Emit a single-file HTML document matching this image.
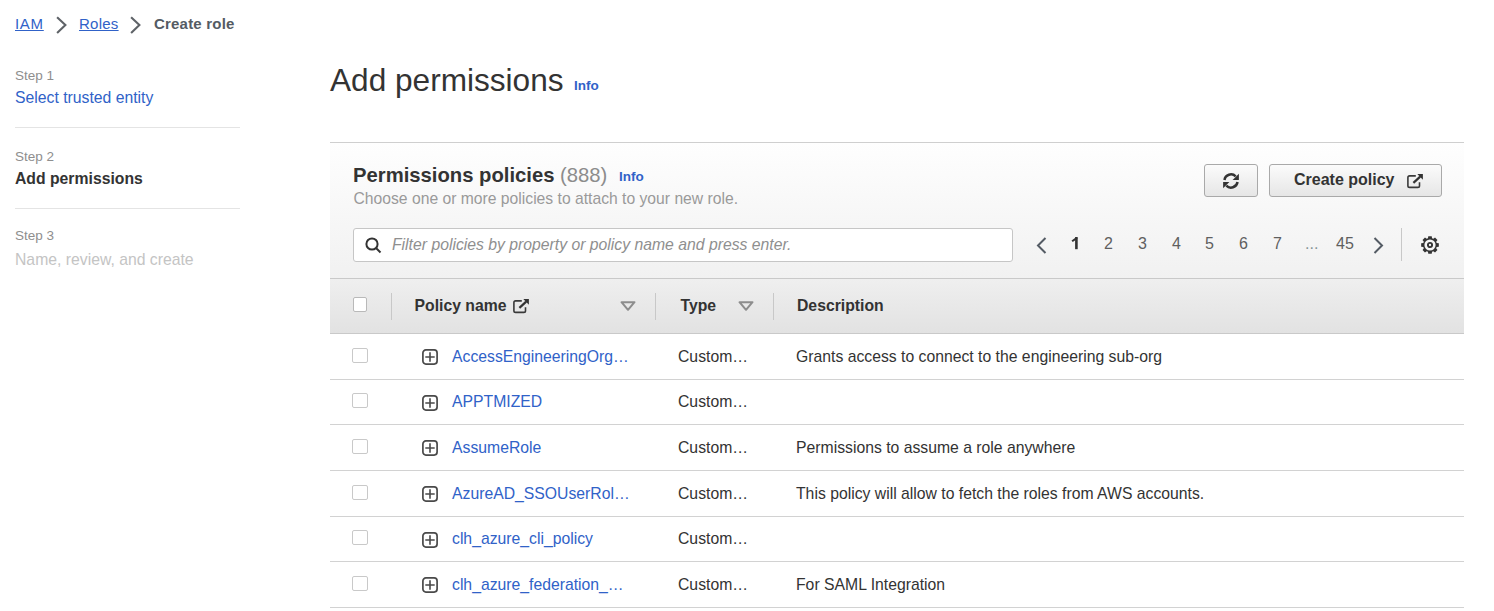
<!DOCTYPE html>
<html><head><meta charset="utf-8">
<style>
html,body{margin:0;padding:0;background:#fff;width:1494px;height:611px;overflow:hidden;position:relative;font-family:"Liberation Sans",sans-serif;}
.t{position:absolute;white-space:nowrap;line-height:1;}
.lk{color:#3062c8;}
.hr{position:absolute;height:1px;background:#e4e4e4;}
svg{position:absolute;overflow:visible;}
.card-h{position:absolute;left:330px;top:142px;width:1134px;height:136px;border-top:1px solid #cfcfcf;background:linear-gradient(#fefefe,#f1f1f1);}
.th{position:absolute;left:330px;top:278px;width:1134px;height:54px;border-top:1px solid #c9c9c9;border-bottom:1px solid #c9c9c9;background:linear-gradient(#efefef,#e2e2e2);}
.btn{position:absolute;top:164px;height:31px;border:1px solid #a9a9a9;border-radius:3px;background:linear-gradient(#fbfbfb,#e6e6e6);}
.inp{position:absolute;left:353px;top:228px;width:658px;height:32px;border:1px solid #c6c6c6;border-radius:3px;background:#fff;}
.cb{position:absolute;width:14px;height:13px;border:1px solid #c9c9c9;border-radius:2px;background:#fff;}
.rowb{position:absolute;left:330px;width:1134px;height:1px;background:#d2d2d2;}
.vd{position:absolute;width:1px;background:#c8c8c8;}
</style></head><body>

<!-- breadcrumbs -->
<div class="t lk" style="left:15px;top:15.5px;font-size:15px;letter-spacing:0.7px;text-decoration:underline;text-underline-offset:1px;">IAM</div>
<svg style="left:56px;top:16px" width="11" height="18" viewBox="0 0 11 18"><polyline points="1.1,1.2 9.4,9.1 1.1,17" fill="none" stroke="#5f6368" stroke-width="2.1"/></svg>
<div class="t lk" style="left:79px;top:15.5px;font-size:15px;letter-spacing:0.25px;text-decoration:underline;text-underline-offset:1px;">Roles</div>
<svg style="left:129.5px;top:16px" width="11" height="18" viewBox="0 0 11 18"><polyline points="1.1,1.2 9.4,9.1 1.1,17" fill="none" stroke="#5f6368" stroke-width="2.1"/></svg>
<div class="t" style="left:154px;top:15.5px;font-size:15px;letter-spacing:0.2px;font-weight:bold;color:#545b64;">Create role</div>

<!-- steps -->
<div class="t" style="left:15px;top:68.5px;font-size:13.5px;color:#8e8e8e;">Step 1</div>
<div class="t lk" style="left:15px;top:89.5px;font-size:15.75px;">Select trusted entity</div>
<div class="hr" style="left:15px;top:127px;width:225px;"></div>
<div class="t" style="left:15px;top:149.5px;font-size:13.5px;color:#8e8e8e;">Step 2</div>
<div class="t" style="left:15px;top:170.5px;font-size:15.75px;font-weight:bold;color:#333;">Add permissions</div>
<div class="hr" style="left:15px;top:208px;width:225px;"></div>
<div class="t" style="left:15px;top:229px;font-size:13.5px;color:#8e8e8e;">Step 3</div>
<div class="t" style="left:15px;top:251.5px;font-size:15.75px;color:#c4c4c4;">Name, review, and create</div>

<!-- h1 -->
<div class="t" style="left:330px;top:64.5px;font-size:31.6px;color:#333;">Add permissions</div>
<div class="t lk" style="left:574px;top:79px;font-size:13.5px;font-weight:bold;">Info</div>

<!-- card header -->
<div class="card-h"></div>
<div class="t" style="left:353px;top:164.5px;font-size:20.25px;font-weight:bold;color:#333;">Permissions policies <span style="font-weight:normal;color:#8c8c8c;">(888)</span></div>
<div class="t lk" style="left:619px;top:169.5px;font-size:13.5px;font-weight:bold;">Info</div>
<div class="t" style="left:353.5px;top:190.5px;font-size:15.7px;color:#9a9a9a;">Choose one or more policies to attach to your new role.</div>

<div class="btn" style="left:1204px;width:52px;"></div>
<div class="btn" style="left:1269px;width:171px;"></div>
<div class="t" style="left:1294px;top:172px;font-size:16px;font-weight:bold;color:#333;">Create policy</div>

<div class="inp"></div>
<div class="t" style="left:392px;top:236.5px;font-size:15.75px;font-style:italic;color:#8f8f8f;">Filter policies by property or policy name and press enter.</div>

<!-- table header -->
<div class="th"></div>


<!-- refresh icon -->
<svg style="left:1223px;top:172.7px" width="16" height="16" viewBox="0 0 16 16"><path d="M1.47 7A6.6 6.6 0 0 1 12.67 3.33" fill="none" stroke="#333" stroke-width="2.5"/><path d="M14.53 9A6.6 6.6 0 0 1 3.33 12.67" fill="none" stroke="#333" stroke-width="2.5"/><path d="M9.6 7.1H15.9V0.8Z" fill="#333"/><path d="M6.4 8.9H0.1V15.2Z" fill="#333"/></svg>
<!-- external icon in button -->
<svg style="left:1407px;top:174px" width="16" height="14" viewBox="0 0 16 14"><path d="M8.8 1.9H2.6Q0.9 1.9 0.9 3.6V11.7Q0.9 13.4 2.6 13.4H10.8Q12.5 13.4 12.5 11.7V8.2" fill="none" stroke="#3a3a3a" stroke-width="1.6"/><path d="M6.4 8.9L13.2 2.6" fill="none" stroke="#333" stroke-width="2.2"/><path d="M10.3 0.1H15.9V5.7Z" fill="#333"/></svg>
<!-- search icon -->
<svg style="left:365px;top:237px" width="17" height="17" viewBox="0 0 17 17"><circle cx="7" cy="7" r="5.6" fill="none" stroke="#333" stroke-width="2"/><path d="M11 11L15.5 15.5" stroke="#333" stroke-width="2"/></svg>

<!-- pagination -->
<svg style="left:1036px;top:237px" width="11" height="17" viewBox="0 0 11 17"><polyline points="9.5,1 2,8.5 9.5,16" fill="none" stroke="#545b64" stroke-width="2"/></svg>
<svg style="left:1071px;top:237px" width="8" height="13" viewBox="0 0 8 13"><path d="M5.4 0V12.2" stroke="#333" stroke-width="2.6"/><path d="M6 0.9L1.1 4.3" fill="none" stroke="#333" stroke-width="2"/></svg>
<div class="t" style="left:1104px;top:236px;font-size:16px;color:#5f5f5f;">2</div>
<div class="t" style="left:1138px;top:236px;font-size:16px;color:#5f5f5f;">3</div>
<div class="t" style="left:1172px;top:236px;font-size:16px;color:#5f5f5f;">4</div>
<div class="t" style="left:1205px;top:236px;font-size:16px;color:#5f5f5f;">5</div>
<div class="t" style="left:1239px;top:236px;font-size:16px;color:#5f5f5f;">6</div>
<div class="t" style="left:1273px;top:236px;font-size:16px;color:#5f5f5f;">7</div>
<div class="t" style="left:1305px;top:236px;font-size:16px;color:#879596;">...</div>
<div class="t" style="left:1336px;top:236px;font-size:16px;color:#5f5f5f;">45</div>
<svg style="left:1373px;top:237px" width="11" height="17" viewBox="0 0 11 17"><polyline points="1.5,1 9,8.5 1.5,16" fill="none" stroke="#545b64" stroke-width="2"/></svg>
<div class="vd" style="left:1401px;top:228px;height:33px;"></div>
<!-- gear -->
<svg style="left:1421px;top:236px" width="18" height="18" viewBox="0 0 18 18"><path d="M6.95 2.31 L7.28 0.17 L10.72 0.17 L11.05 2.31 L12.29 2.82 L14.03 1.54 L16.46 3.97 L15.18 5.71 L15.69 6.95 L17.83 7.28 L17.83 10.72 L15.69 11.05 L15.18 12.29 L16.46 14.03 L14.03 16.46 L12.29 15.18 L11.05 15.69 L10.72 17.83 L7.28 17.83 L6.95 15.69 L5.71 15.18 L3.97 16.46 L1.54 14.03 L2.82 12.29 L2.31 11.05 L0.17 10.72 L0.17 7.28 L2.31 6.95 L2.82 5.71 L1.54 3.97 L3.97 1.54 L5.71 2.82Z M14.6 9A5.6 5.6 0 1 0 3.4 9A5.6 5.6 0 1 0 14.6 9Z" fill="#333" fill-rule="evenodd"/><circle cx="9" cy="9" r="2.1" fill="none" stroke="#333" stroke-width="1.9"/></svg>

<!-- table header content -->
<div class="cb" style="left:353px;top:297px;width:12px;height:13px;border-color:#b9b9b9;"></div>
<div class="vd" style="left:391px;top:293px;height:27px;"></div>
<div class="t" style="left:414.5px;top:298px;font-size:15.75px;font-weight:bold;color:#333;">Policy name</div>
<svg style="left:513px;top:299px" width="16" height="14" viewBox="0 0 16 14"><path d="M8.8 1.9H2.6Q0.9 1.9 0.9 3.6V11.7Q0.9 13.4 2.6 13.4H10.8Q12.5 13.4 12.5 11.7V8.2" fill="none" stroke="#3a3a3a" stroke-width="1.6"/><path d="M6.4 8.9L13.2 2.6" fill="none" stroke="#333" stroke-width="2.2"/><path d="M10.3 0.1H15.9V5.7Z" fill="#333"/></svg>
<svg style="left:620px;top:301px" width="16" height="10" viewBox="0 0 16 10"><path d="M1.5 1.2H14.5L8 8.8Z" fill="none" stroke="#8d8d8d" stroke-width="2" stroke-linejoin="round"/></svg>
<div class="vd" style="left:655px;top:293px;height:27px;"></div>
<div class="t" style="left:680.5px;top:298px;font-size:15.75px;font-weight:bold;color:#333;">Type</div>
<svg style="left:738px;top:301px" width="16" height="10" viewBox="0 0 16 10"><path d="M1.5 1.2H14.5L8 8.8Z" fill="none" stroke="#8d8d8d" stroke-width="2" stroke-linejoin="round"/></svg>
<div class="vd" style="left:773px;top:293px;height:27px;"></div>
<div class="t" style="left:797px;top:298px;font-size:15.75px;font-weight:bold;color:#333;">Description</div>
<div class="cb" style="left:352px;top:348.0px;"></div>
<svg style="left:422px;top:349.2px" width="16" height="16" viewBox="0 0 16 16"><rect x="0.9" y="0.9" width="14.2" height="14.2" rx="3" fill="none" stroke="#4a4a4a" stroke-width="1.7"/><path d="M8 3.3V12.7M3.3 8H12.7" stroke="#4a4a4a" stroke-width="1.6"/></svg>
<div class="t lk" style="left:452px;top:349.0px;font-size:15.75px;">AccessEngineeringOrg…</div>
<div class="t" style="left:678px;top:349.0px;font-size:15.75px;color:#333;">Custom…</div>
<div class="t" style="left:796px;top:349.0px;font-size:15.75px;color:#333;">Grants access to connect to the engineering sub-org</div>
<div class="rowb" style="top:379px;"></div>
<div class="cb" style="left:352px;top:393px;"></div>
<svg style="left:422px;top:394.8px" width="16" height="16" viewBox="0 0 16 16"><rect x="0.9" y="0.9" width="14.2" height="14.2" rx="3" fill="none" stroke="#4a4a4a" stroke-width="1.7"/><path d="M8 3.3V12.7M3.3 8H12.7" stroke="#4a4a4a" stroke-width="1.6"/></svg>
<div class="t lk" style="left:452px;top:393.6px;font-size:15.75px;">APPTMIZED</div>
<div class="t" style="left:678px;top:393.6px;font-size:15.75px;color:#333;">Custom…</div>
<div class="rowb" style="top:424px;"></div>
<div class="cb" style="left:352px;top:439.0px;"></div>
<svg style="left:422px;top:440.2px" width="16" height="16" viewBox="0 0 16 16"><rect x="0.9" y="0.9" width="14.2" height="14.2" rx="3" fill="none" stroke="#4a4a4a" stroke-width="1.7"/><path d="M8 3.3V12.7M3.3 8H12.7" stroke="#4a4a4a" stroke-width="1.6"/></svg>
<div class="t lk" style="left:452px;top:440.0px;font-size:15.75px;">AssumeRole</div>
<div class="t" style="left:678px;top:440.0px;font-size:15.75px;color:#333;">Custom…</div>
<div class="t" style="left:796px;top:440.0px;font-size:15.75px;color:#333;">Permissions to assume a role anywhere</div>
<div class="rowb" style="top:470px;"></div>
<div class="cb" style="left:352px;top:484.9px;"></div>
<svg style="left:422px;top:486.1px" width="16" height="16" viewBox="0 0 16 16"><rect x="0.9" y="0.9" width="14.2" height="14.2" rx="3" fill="none" stroke="#4a4a4a" stroke-width="1.7"/><path d="M8 3.3V12.7M3.3 8H12.7" stroke="#4a4a4a" stroke-width="1.6"/></svg>
<div class="t lk" style="left:452px;top:485.9px;font-size:15.75px;">AzureAD_SSOUserRol…</div>
<div class="t" style="left:678px;top:485.9px;font-size:15.75px;color:#333;">Custom…</div>
<div class="t" style="left:796px;top:485.9px;font-size:15.75px;color:#333;">This policy will allow to fetch the roles from AWS accounts.</div>
<div class="rowb" style="top:516px;"></div>
<div class="cb" style="left:352px;top:530.3px;"></div>
<svg style="left:422px;top:531.5px" width="16" height="16" viewBox="0 0 16 16"><rect x="0.9" y="0.9" width="14.2" height="14.2" rx="3" fill="none" stroke="#4a4a4a" stroke-width="1.7"/><path d="M8 3.3V12.7M3.3 8H12.7" stroke="#4a4a4a" stroke-width="1.6"/></svg>
<div class="t lk" style="left:452px;top:531.3px;font-size:15.75px;">clh_azure_cli_policy</div>
<div class="t" style="left:678px;top:531.3px;font-size:15.75px;color:#333;">Custom…</div>
<div class="rowb" style="top:561px;"></div>
<div class="cb" style="left:352px;top:576.0px;"></div>
<svg style="left:422px;top:577.2px" width="16" height="16" viewBox="0 0 16 16"><rect x="0.9" y="0.9" width="14.2" height="14.2" rx="3" fill="none" stroke="#4a4a4a" stroke-width="1.7"/><path d="M8 3.3V12.7M3.3 8H12.7" stroke="#4a4a4a" stroke-width="1.6"/></svg>
<div class="t lk" style="left:452px;top:577.0px;font-size:15.75px;">clh_azure_federation_…</div>
<div class="t" style="left:678px;top:577.0px;font-size:15.75px;color:#333;">Custom…</div>
<div class="t" style="left:796px;top:577.0px;font-size:15.75px;color:#333;">For SAML Integration</div>
<div class="rowb" style="top:607px;"></div>
</body></html>
